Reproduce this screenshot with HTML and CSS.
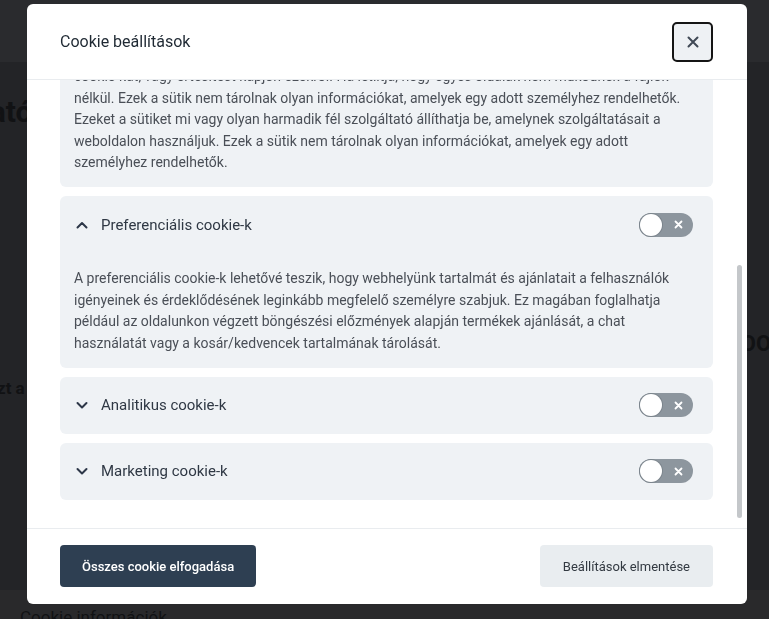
FILE: index.html
```html
<!DOCTYPE html>
<html lang="hu">
<head>
  <meta charset="UTF-8">
  <meta name="viewport" content="width=device-width, initial-scale=1.0">
  <title>Cookie beállítások</title>
  <link rel="stylesheet" href="styles.css">
</head>
<body>
  <div class="page">
    <div class="topbar"></div>
    <h1 class="page-title">Adatkezelési tájékoztató</h1>
    <div class="page-side">
      <p class="page-lead">Kérjük, olvassa el ezt a tájékoztatót.</p>
      <p class="page-right">POOL</p>
    </div>
    <div class="page-footer">Cookie információk</div>
  </div>

  <div class="overlay">
    <div class="modal">
      <div class="modal-header">
        <h2>Cookie beállítások</h2>
        <button class="close-btn" aria-label="Bezárás">
          <svg width="14" height="14" viewBox="0 0 14 14"><path d="M2.5 2.5 L11.5 11.5 M11.5 2.5 L2.5 11.5" stroke="#404955" stroke-width="2" stroke-linecap="round"/></svg>
        </button>
      </div>

      <div class="modal-body" id="modalBody">
        <p class="intro">
          Weboldalunk cookie-kat (sütiket) használ annak érdekében, hogy a lehető legjobb élményt nyújtsa
          látogatóinak. Az alábbiakban kategóriánként beállíthatja, hogy mely cookie-k használatához járul
          hozzá. A szükséges cookie-k a weboldal működéséhez elengedhetetlenek, ezért nem kapcsolhatók ki.
        </p>

        <div class="cookie-group">
          <div class="group-head">
            <svg class="chevron" width="12" height="8" viewBox="0 0 12 8"><polyline points="1.5,6.5 6,2 10.5,6.5" fill="none" stroke="#2d3748" stroke-width="2" stroke-linecap="round" stroke-linejoin="round"/></svg>
            <span class="group-title">Szükséges cookie-k</span>
            <span class="toggle on"><span class="knob"></span></span>
          </div>
          <p class="group-text">
            A szükséges cookie-k segítenek használhatóvá tenni a weboldalt azáltal, hogy engedélyeznek olyan
            alapvető funkciókat, mint az oldalon való navigáció és a weboldal biztonságos területeihez való
            hozzáférés. Beállíthatja böngészőjét, hogy letiltsa ezeket a<br>
            cookie-kat, vagy értesítést kapjon ezekről. Ha letiltja, hogy egyes oldalak nem működnek a fájlok
            nélkül. Ezek a sütik nem tárolnak olyan információkat, amelyek egy adott személyhez rendelhetők.
            Ezeket a sütiket mi vagy olyan harmadik fél szolgáltató állíthatja be, amelynek szolgáltatásait a
            weboldalon használjuk. Ezek a sütik nem tárolnak olyan információkat, amelyek egy adott
            személyhez rendelhetők.
          </p>
        </div>

        <div class="cookie-group">
          <div class="group-head">
            <svg class="chevron" width="12" height="8" viewBox="0 0 12 8"><polyline points="1.5,6.5 6,2 10.5,6.5" fill="none" stroke="#2d3748" stroke-width="2" stroke-linecap="round" stroke-linejoin="round"/></svg>
            <span class="group-title">Preferenciális cookie-k</span>
            <span class="toggle"><span class="knob"></span><svg class="toggle-x" width="9" height="9" viewBox="0 0 9 9"><path d="M1.5 1.5 L7.5 7.5 M7.5 1.5 L1.5 7.5" stroke="#fff" stroke-width="1.8" stroke-linecap="round"/></svg></span>
          </div>
          <p class="group-text">
            A preferenciális cookie-k lehetővé teszik, hogy webhelyünk tartalmát és ajánlatait a felhasználók
            igényeinek és érdeklődésének leginkább megfelelő személyre szabjuk. Ez magában foglalhatja
            például az oldalunkon végzett böngészési előzmények alapján termékek ajánlását, a chat<br>
            használatát vagy a kosár/kedvencek tartalmának tárolását.
          </p>
        </div>

        <div class="cookie-group">
          <div class="group-head">
            <svg class="chevron" width="12" height="8" viewBox="0 0 12 8"><polyline points="1.5,2 6,6.5 10.5,2" fill="none" stroke="#2d3748" stroke-width="2" stroke-linecap="round" stroke-linejoin="round"/></svg>
            <span class="group-title">Analitikus cookie-k</span>
            <span class="toggle"><span class="knob"></span><svg class="toggle-x" width="9" height="9" viewBox="0 0 9 9"><path d="M1.5 1.5 L7.5 7.5 M7.5 1.5 L1.5 7.5" stroke="#fff" stroke-width="1.8" stroke-linecap="round"/></svg></span>
          </div>
        </div>

        <div class="cookie-group">
          <div class="group-head">
            <svg class="chevron" width="12" height="8" viewBox="0 0 12 8"><polyline points="1.5,2 6,6.5 10.5,2" fill="none" stroke="#2d3748" stroke-width="2" stroke-linecap="round" stroke-linejoin="round"/></svg>
            <span class="group-title">Marketing cookie-k</span>
            <span class="toggle"><span class="knob"></span><svg class="toggle-x" width="9" height="9" viewBox="0 0 9 9"><path d="M1.5 1.5 L7.5 7.5 M7.5 1.5 L1.5 7.5" stroke="#fff" stroke-width="1.8" stroke-linecap="round"/></svg></span>
          </div>
        </div>
      </div>

      <div class="scroll-thumb"></div>

      <div class="modal-footer">
        <button class="btn btn-dark">Összes cookie elfogadása</button>
        <button class="btn btn-light">Beállítások elmentése</button>
      </div>
    </div>
  </div>

  <script src="script.js"></script>
</body>
</html>
```

FILE: styles.css
```css
html, body {
  margin: 0;
  padding: 0;
  height: 100%;
  overflow: hidden;
}

body {
  font-family: Roboto, "Liberation Sans", sans-serif;
  background: #232427;
  color: #111214;
}

/* dimmed page behind the dialog */
.page {
  height: 100%;
  display: flex;
  flex-direction: column;
}

.topbar {
  height: 62px;
  flex-shrink: 0;
  background: #2a2b2e;
}

.page-title {
  margin: 32px 0 0 -300px;
  font-size: 30px;
  font-weight: 700;
  white-space: nowrap;
}

.page-side {
  flex: 1;
  display: flex;
  justify-content: space-between;
  align-items: flex-start;
}

.page-lead {
  margin: 249px 0 0 -150px;
  font-size: 17px;
  font-weight: 700;
  white-space: nowrap;
}

.page-right {
  margin: 202px -14px 0 0;
  font-size: 22px;
  font-weight: 700;
}

.page-footer {
  height: 29px;
  flex-shrink: 0;
  box-sizing: border-box;
  background: #29292b;
  padding: 17px 0 0 20px;
  font-size: 17px;
  overflow: hidden;
}

/* dialog */
.overlay {
  position: fixed;
  inset: 0;
}

.modal {
  position: relative;
  width: 720px;
  height: 600px;
  margin: 4px 0 0 27px;
  background: #fff;
  border-radius: 6px;
  display: flex;
  flex-direction: column;
  overflow: hidden;
}

.modal-header {
  height: 75px;
  flex-shrink: 0;
  border-bottom: 1px solid #e9ecef;
  display: flex;
  align-items: center;
  justify-content: space-between;
  padding: 0 34px 0 33px;
}

.modal-header h2 {
  margin: 0;
  font-size: 16px;
  font-weight: 400;
  color: #1f2933;
}

.close-btn {
  width: 41px;
  height: 40px;
  border: 2px solid #151515;
  border-radius: 5px;
  background: #eef1f4;
  display: flex;
  align-items: center;
  justify-content: center;
  padding: 0;
  cursor: pointer;
}

.modal-body {
  flex: 1;
  overflow-y: auto;
  padding: 28px 34px 28px 33px;
}

/* thin overlay scrollbar of the body */
.scroll-thumb {
  position: absolute;
  top: 261px;
  right: 5px;
  width: 5px;
  height: 253px;
  border-radius: 3px;
  background: #c4c7ca;
}

.intro {
  margin: 0 0 20px;
  font-size: 14px;
  line-height: 21.5px;
  color: #4a4f57;
}

.cookie-group {
  background: #eff2f5;
  border-radius: 6px;
  margin-bottom: 9px;
}

.cookie-group:last-child {
  margin-bottom: 0;
}

.group-head {
  height: 57px;
  display: flex;
  align-items: center;
  padding: 0 20px 0 16px;
}

.chevron {
  margin-right: 13px;
}

.group-title {
  flex: 1;
  font-size: 15px;
  color: #2f3844;
}

.toggle {
  width: 54px;
  height: 24px;
  border-radius: 12px;
  background: #8d969e;
  display: flex;
  align-items: center;
  justify-content: space-between;
  padding: 0 10px 0 1px;
  box-sizing: border-box;
}

.toggle .knob {
  width: 22px;
  height: 22px;
  border-radius: 50%;
  background: #fff;
  box-shadow: 0 0 0 1px #7c858d;
}

.toggle.on {
  background: #2e3f52;
  flex-direction: row-reverse;
  padding: 0 1px;
}

.group-text {
  margin: 0;
  padding: 15px 14px 13.5px;
  font-size: 14px;
  line-height: 21.5px;
  color: #4a4f57;
}

.modal-footer {
  flex-shrink: 0;
  border-top: 1px solid #e9ecef;
  display: flex;
  justify-content: space-between;
  padding: 16px 34px 17px 33px;
}

.btn {
  height: 42px;
  border: none;
  border-radius: 4px;
  font-family: inherit;
  font-size: 13px;
  padding: 0 22px;
  cursor: pointer;
}

.btn-dark {
  background: #2e3f52;
  color: #fff;
  font-weight: 500;
}

.btn-light {
  background: #e9edf0;
  color: #333a42;
  padding: 0 23px;
}
```

FILE: script.js
```js
var body = document.getElementById('modalBody');
body.scrollTop = body.scrollHeight;
```
